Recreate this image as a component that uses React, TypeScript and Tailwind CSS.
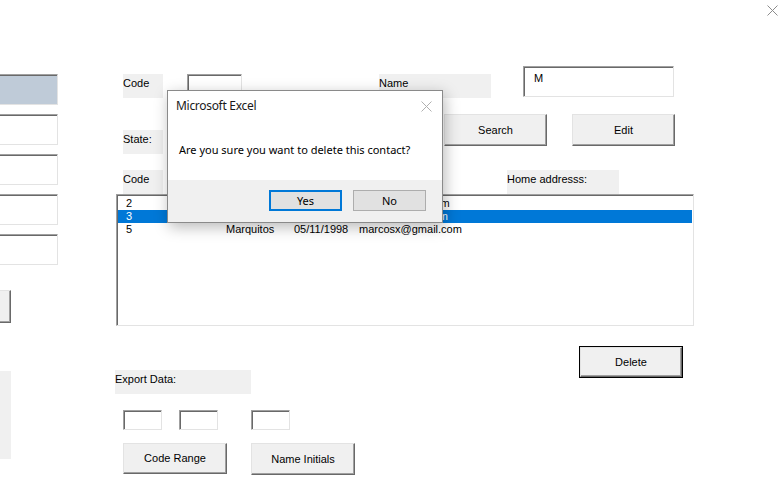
import React from 'react'

const sunken =
  'border border-[#e3e3e3] border-t-[#a0a0a0] border-l-[#a0a0a0] shadow-[inset_1px_1px_0_#696969] bg-white'
const raised =
  'border border-[#e3e3e3] border-r-[#696969] border-b-[#696969] shadow-[inset_-1px_-1px_0_#a0a0a0] bg-[#f0f0f0] flex items-center justify-center'
const label = 'bg-[#f0f0f0] leading-[14px] pt-[2px]'

const rows = [
  {code: '2', name: '', date: '', email: 'carlos@gmail.com'},
  {code: '3', name: '', date: '', email: 'maria@gmail.com'},
  {code: '5', name: 'Marquitos', date: '05/11/1998', email: 'marcosx@gmail.com'},
]

function CloseX({className}: {className: string}) {
  return (
    <svg width="11" height="11" viewBox="0 0 11 11" className={className}>
      <path d="M0.5 0.5 L10.5 10.5 M10.5 0.5 L0.5 10.5" stroke="currentColor" strokeWidth="1" fill="none" />
    </svg>
  )
}

export default function App() {
  return (
    <div className="relative w-[783px] h-[484px] overflow-hidden bg-white text-[11px] text-black font-['Liberation_Sans',Arial,sans-serif]">
      <div className="flex">
        {/* left column, clipped by the window edge */}
        <div className="w-[58px] shrink-0 pt-[74px] flex flex-col overflow-hidden">
          <div className={`${sunken} h-[31px] w-[62px] -ml-[4px] !bg-[#bfcbd8]`} />
          <div className={`${sunken} h-[31px] w-[62px] -ml-[4px] mt-[9px]`} />
          <div className={`${sunken} h-[31px] w-[62px] -ml-[4px] mt-[9px]`} />
          <div className={`${sunken} h-[31px] w-[62px] -ml-[4px] mt-[9px]`} />
          <div className={`${sunken} h-[31px] w-[62px] -ml-[4px] mt-[9px]`} />
          <div className={`${raised} h-[33px] w-[15px] -ml-[4px] mt-[25px]`} />
          <div className="bg-[#f0f0f0] h-[88px] w-[11px] mt-[48px]" />
        </div>

        {/* form */}
        <div className="ml-[57px] flex-1 min-w-0 flex flex-col">
          <div className="h-[66px] flex justify-end pt-[5px] pr-[5px]">
            <CloseX className="text-[#8c8c8c]" />
          </div>

          <div className="h-[48px] flex items-start">
            <div className={`${label} ml-[8px] mt-[8px] w-[40px] h-[24px]`}>Code</div>
            <div className={`${sunken} ml-[24px] mt-[8px] w-[55px] h-[24px]`} />
            <div className={`${label} ml-[137px] mt-[8px] w-[112px] h-[24px]`}>Name</div>
            <div className={`${sunken} ml-[32px] w-[151px] h-[31px] pl-[10px] pt-[4px] leading-[14px]`}>M</div>
          </div>

          <div className="h-[56px] flex items-start">
            <div className={`${label} ml-[8px] mt-[16px] w-[40px] h-[24px]`}>State:</div>
            <div className={`${raised} ml-[281px] w-[103px] h-[32px]`}>Search</div>
            <div className={`${raised} ml-[25px] w-[103px] h-[32px]`}>Edit</div>
          </div>

          <div className="h-[24px] flex items-start">
            <div className={`${label} ml-[8px] w-[40px] h-[24px]`}>Code</div>
            <div className={`${label} ml-[344px] w-[112px] h-[24px]`}>Home addresss:</div>
          </div>

          <div className={`${sunken} ml-[1px] w-[578px] h-[132px] pt-[2px] pl-[1px] pr-[1px]`}>
            {rows.map((r, i) => (
              <div
                key={r.code}
                className={`flex h-[13px] leading-[13px] ${i === 1 ? 'bg-[#0078d7] text-white' : ''}`}
              >
                <span className="ml-[8px] w-[100px]">{r.code}</span>
                <span className="w-[68px]">{r.name}</span>
                <span className="w-[65px]">{r.date}</span>
                <span>{r.email}</span>
              </div>
            ))}
          </div>

          <div className="flex items-start">
            <div className="mt-[44px] flex flex-col w-[240px]">
              <div className={`${label} w-[136px] h-[24px]`}>Export Data:</div>
              <div className="flex mt-[16px]">
                <div className={`${sunken} ml-[8px] w-[39px] h-[20px]`} />
                <div className={`${sunken} ml-[17px] w-[39px] h-[20px]`} />
                <div className={`${sunken} ml-[33px] w-[39px] h-[20px]`} />
              </div>
              <div className="flex mt-[13px]">
                <div className={`${raised} ml-[8px] w-[104px] h-[31px]`}>Code Range</div>
                <div className={`${raised} ml-[24px] w-[104px] h-[32px]`}>Name Initials</div>
              </div>
            </div>
            <div className="ml-[224px] mt-[20px] border border-black">
              <div className={`${raised} w-[102px] h-[30px]`}>Delete</div>
            </div>
          </div>
        </div>
      </div>

      {/* message box over the form */}
      <div className="absolute left-[167px] top-[90px] w-[276px] h-[133px] border border-[#8a8a8a] bg-white flex flex-col shadow-[2px_4px_14px_rgba(0,0,0,0.28)] font-['Noto_Sans',sans-serif] text-[11px]">
        <div className="h-[40px] flex justify-between pl-[8px] pr-[10px] pt-[7px]">
          <span className="leading-[16px] text-[12px] text-[#1a1a1a] tracking-[-0.3px]">Microsoft Excel</span>
          <CloseX className="mt-[3px] text-[#b0b0b0]" />
        </div>
        <div className="h-[49px] pl-[11px] pt-[11px] leading-[16px]">Are you sure you want to delete this contact?</div>
        <div className="flex-1 bg-[#f0f0f0] flex justify-end gap-[11px] pr-[16px] pt-[10px]">
          <div className="w-[73px] h-[21px] border-2 border-[#0078d7] bg-[#e1e1e1] flex items-center justify-center leading-none">Yes</div>
          <div className="w-[73px] h-[21px] border border-[#adadad] bg-[#e1e1e1] flex items-center justify-center leading-none">No</div>
        </div>
      </div>
    </div>
  )
}
